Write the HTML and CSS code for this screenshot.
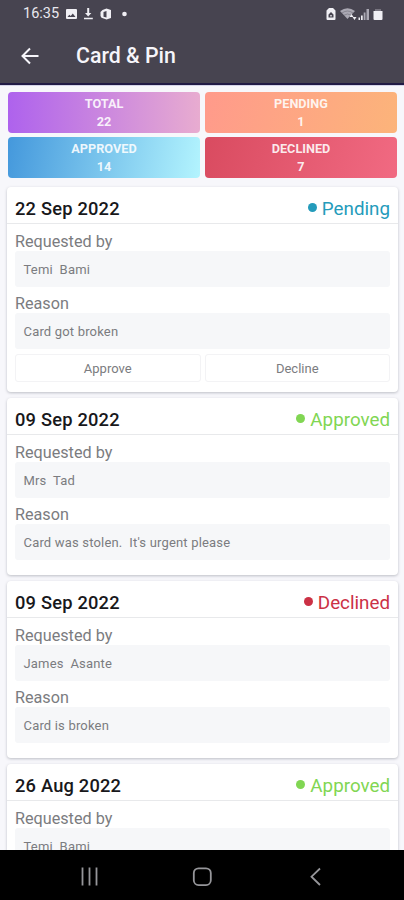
FILE: index.html
```html
<!DOCTYPE html>
<html lang="en">
<head>
<meta charset="utf-8">
<title>Card &amp; Pin</title>
<link rel="stylesheet" href="styles.css">
</head>
<body>
<div class="screen">
  <header class="header">
    <div class="status-bar">
      <span class="time">16:35</span>
      <svg class="status-left" width="64" height="14" viewBox="0 0 64 14" fill="#f0eff4">
        <path fill-rule="evenodd" d="M2 2h9q1 0 1 1v8q0 1-1 1H2q-1 0-1-1V3q0-1 1-1zM2.500 10h8L7.800 6.500 5.700 9 4.300 7.700z"/>
        <path d="M22.200 1h2v5h2.200l-3.200 3.600L20 6h2.200zM19 10.800h8.800v1.400H19z"/>
        <path fill-rule="evenodd" d="M41.500 1.500 46 3v8l-4.500 1.500-5-1.800L35.500 9V5l2-2zM41.500 4l-3 1v4.800l3 .6z"/>
        <circle cx="59.500" cy="7" r="2.300"/>
      </svg>
      <svg class="status-right" width="60" height="14" viewBox="0 0 60 14" fill="#f0eff4">
        <path fill-rule="evenodd" d="M3 2 4 1h4l1 1 1.500 1.500V12q0 1-1 1h-7q-1 0-1-1V3.500zM6 5 3.500 7.500v3h5v-3zM5.300 8h1.400v1.500H5.300z"/>
        <path fill="#aaa8b3" d="M15 4q7.500-5.500 15 0l-5 5-2.500 3z"/>
        <path fill="none" stroke="#77747f" stroke-width=".7" d="M17 6q5.500-4 11 0M19 8.200q3.500-2.500 7 0"/>
        <path d="m26.500 7 2 3h-4zM29.500 13l-2-3h4z"/>
        <path d="M33.500 10.500H35V13h-1.500zM36 8.500h1.700V13H36z"/>
        <path fill="#aaa8b3" d="M38.700 5.500h1.800V13h-1.800zM41.500 2h2.500v11h-2.500z"/>
        <path fill="#77747f" d="M50 2h6v2h-6z"/><path d="M48.500 4H57.500v8q0 1-1 1h-7q-1 0-1-1z"/>
      </svg>
    </div>
    <div class="title-bar">
      <svg class="back" width="18" height="18" viewBox="0 0 18 18" fill="none" stroke="#f6f5fa" stroke-width="2"><path d="M17.500 9H2M9 1.500 1.500 9 9 16.500"/></svg>
      <h1 class="title">Card &amp; Pin</h1>
    </div>
  </header>

  <main class="content">
    <section class="stats">
      <div class="stat total"><span>TOTAL</span><span>22</span></div>
      <div class="stat waiting"><span>PENDING</span><span>1</span></div>
      <div class="stat accepted"><span>APPROVED</span><span>14</span></div>
      <div class="stat refused"><span>DECLINED</span><span>7</span></div>
    </section>

    <article class="card">
      <div class="card-head"><h2 class="date">22 Sep 2022</h2><span class="state pending">Pending</span></div>
      <div class="card-body">
        <div class="label">Requested by</div><div class="field">Temi  Bami</div>
        <div class="label reason">Reason</div><div class="field">Card got broken</div>
        <div class="actions"><button class="action">Approve</button><button class="action">Decline</button></div>
      </div>
    </article>

    <article class="card">
      <div class="card-head"><h2 class="date">09 Sep 2022</h2><span class="state approved">Approved</span></div>
      <div class="card-body">
        <div class="label">Requested by</div><div class="field">Mrs  Tad</div>
        <div class="label reason">Reason</div><div class="field">Card was stolen.  It's urgent please</div>
      </div>
    </article>

    <article class="card">
      <div class="card-head"><h2 class="date">09 Sep 2022</h2><span class="state declined">Declined</span></div>
      <div class="card-body">
        <div class="label">Requested by</div><div class="field">James  Asante</div>
        <div class="label reason">Reason</div><div class="field">Card is broken</div>
      </div>
    </article>

    <article class="card">
      <div class="card-head"><h2 class="date">26 Aug 2022</h2><span class="state approved">Approved</span></div>
      <div class="card-body">
        <div class="label">Requested by</div><div class="field">Temi  Bami</div>
      </div>
    </article>
  </main>

  <nav class="nav-bar">
    <svg width="404" height="50" viewBox="0 0 404 50" fill="none" stroke="#96969a" stroke-width="1.800">
      <path d="M82.500 17.500v18M89.500 17.500v18M96.500 17.500v18"/>
      <rect x="193.800" y="18.300" width="17" height="16.800" rx="4.800"/>
      <path d="M320 18.500 311.500 26.700 320 35"/>
    </svg>
  </nav>
</div>
</body>
</html>
```
FILE: styles.css
```css
* { box-sizing: border-box; }
body { margin: 0; font-family: Roboto, "Liberation Sans", sans-serif; background: #f7f7fb; }
h1, h2 { margin: 0; }

.screen { width: 404px; height: 900px; display: flex; flex-direction: column; overflow: hidden; }

.header { flex: none; height: 86px; background: #474450; border-bottom: 1px solid #d5d4e8; box-shadow: inset 0 -2px 0 #211b45; }
.status-bar { height: 28px; padding: 0 19px 0 23px; display: flex; align-items: center; }
.time { width: 42px; font-size: 14.500px; line-height: 28px; color: #e9e8ee; }
.status-right { margin-left: auto; }
.title-bar { height: 56px; padding-left: 21px; display: flex; align-items: center; }
.title { margin-left: 37px; font-size: 21.300px; font-weight: 500; line-height: 28px; color: #f6f5fa; }

.content { flex: 1; min-height: 0; overflow: hidden; padding: 6px 6px 0 7px; }

.stats { display: grid; grid-template-columns: 1fr 1fr; gap: 4px 5px; padding: 0 1px; margin-bottom: 9px; }
.stat { height: 41px; border-radius: 4px; display: flex; flex-direction: column; align-items: center; padding-top: 3px; font-size: 12.700px; font-weight: 700; line-height: 18px; color: rgba(255, 255, 255, .88); }
.total { background: linear-gradient(90deg, #ae62ed, #e8acd0); }
.waiting { background: linear-gradient(105deg, #ff9a8b, #fcb47a); }
.accepted { background: linear-gradient(100deg, #4498dc, #b3f4fe); }
.refused { background: linear-gradient(105deg, #d94b60, #f16a82); }

.card { height: 177px; margin-bottom: 6px; background: #fff; border-radius: 4px; box-shadow: 0 1px 3px rgba(40, 45, 60, .28); }
.card:has(.actions) { height: 205px; }
.card-head { height: 37px; padding: 8px 8px 0; border-bottom: 1px solid #e8e9eb; display: flex; justify-content: space-between; }
.date { font-size: 18.300px; letter-spacing: .2px; font-weight: 500; line-height: 28px; color: #18181b; }
.state { display: flex; align-items: center; font-size: 18.800px; line-height: 28px; font-weight: 400; }
.state::before { content: ""; width: 9px; height: 9px; margin: -3px 5px 0 0; border-radius: 50%; background: currentColor; }
.pending { color: #249bbb; }
.approved { color: #81d653; }
.declined { color: #cb3145; }

.card-body { padding: 0 8px; }
.label { height: 27px; padding-top: 5px; font-size: 16.200px; line-height: 26px; color: #7b7c80; }
.reason { height: 26px; padding-top: 4px; }
.field { height: 36px; padding-left: 8.500px; border-radius: 3px; background: #f6f7f9; font-size: 13px; letter-spacing: .18px; line-height: 37px; color: #7b7c80; white-space: pre; }
.actions { display: flex; gap: 4px; padding-top: 5px; }
.action { flex: 1; height: 28px; padding: 1px 0 0; border: 1px solid #f3f3f5; border-radius: 3px; background: #fff; font-family: inherit; font-size: 13px; line-height: 26px; color: #7b7c80; }

.nav-bar { flex: none; height: 50px; background: #000; }
.nav-bar svg { display: block; }
```
